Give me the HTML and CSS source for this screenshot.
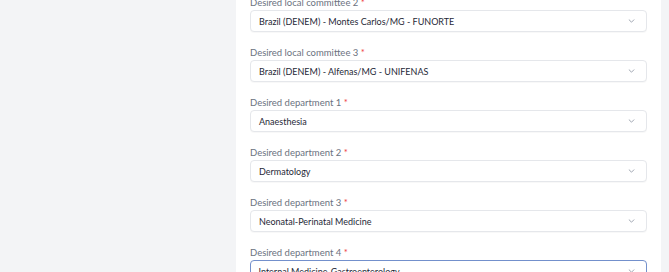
FILE: index.html
```html
<!DOCTYPE html>
<html lang="en">
<head>
  <meta charset="UTF-8" />
  <title>Application preferences</title>
  <link rel="stylesheet" href="styles.css">
</head>
<body>
  <div class="page">
    <div class="panel">
      <form class="form">
        <div class="field">
          <label class="field-label">Desired local committee 2 <span class="req">*</span></label>
          <div class="select">
            <span class="select-value">Brazil (DENEM) - Montes Carlos/MG - FUNORTE</span>
            <svg class="chevron" viewBox="0 0 8 5" width="7" height="4"><path d="M1 1l3 3 3-3" fill="none" stroke="#9ca3af" stroke-width="1.2" stroke-linecap="round" stroke-linejoin="round"/></svg>
          </div>
        </div>
        <div class="field">
          <label class="field-label">Desired local committee 3 <span class="req">*</span></label>
          <div class="select">
            <span class="select-value">Brazil (DENEM) - Alfenas/MG - UNIFENAS</span>
            <svg class="chevron" viewBox="0 0 8 5" width="7" height="4"><path d="M1 1l3 3 3-3" fill="none" stroke="#9ca3af" stroke-width="1.2" stroke-linecap="round" stroke-linejoin="round"/></svg>
          </div>
        </div>
        <div class="field">
          <label class="field-label">Desired department 1 <span class="req">*</span></label>
          <div class="select">
            <span class="select-value">Anaesthesia</span>
            <svg class="chevron" viewBox="0 0 8 5" width="7" height="4"><path d="M1 1l3 3 3-3" fill="none" stroke="#9ca3af" stroke-width="1.2" stroke-linecap="round" stroke-linejoin="round"/></svg>
          </div>
        </div>
        <div class="field">
          <label class="field-label">Desired department 2 <span class="req">*</span></label>
          <div class="select">
            <span class="select-value">Dermatology</span>
            <svg class="chevron" viewBox="0 0 8 5" width="7" height="4"><path d="M1 1l3 3 3-3" fill="none" stroke="#9ca3af" stroke-width="1.2" stroke-linecap="round" stroke-linejoin="round"/></svg>
          </div>
        </div>
        <div class="field">
          <label class="field-label">Desired department 3 <span class="req">*</span></label>
          <div class="select">
            <span class="select-value">Neonatal-Perinatal Medicine</span>
            <svg class="chevron" viewBox="0 0 8 5" width="7" height="4"><path d="M1 1l3 3 3-3" fill="none" stroke="#9ca3af" stroke-width="1.2" stroke-linecap="round" stroke-linejoin="round"/></svg>
          </div>
        </div>
        <div class="field">
          <label class="field-label">Desired department 4 <span class="req">*</span></label>
          <div class="select focused">
            <span class="select-value">Internal Medicine-Gastroenterology</span>
            <svg class="chevron" viewBox="0 0 8 5" width="7" height="4"><path d="M1 1l3 3 3-3" fill="none" stroke="#9ca3af" stroke-width="1.2" stroke-linecap="round" stroke-linejoin="round"/></svg>
          </div>
        </div>
      </form>
    </div>
  </div>
</body>
</html>
```

FILE: styles.css
```css
* {
  box-sizing: border-box;
  margin: 0;
  padding: 0;
}

html, body {
  width: 100%;
  height: 100%;
  overflow: hidden;
  background-color: #f3f4f6;
  font-family: 'Lato', 'Noto Sans', sans-serif;
}

.page {
  display: flex;
  padding-left: 236px;
  height: 100%;
}

.panel {
  width: 425px;
  background-color: #fff;
  padding: 0 14px;
  height: 100%;
}

.form {
  display: flex;
  flex-direction: column;
  gap: 14px;
  margin-top: -4px;
}

.field {
  display: flex;
  flex-direction: column;
}

.field-label {
  font-size: 9.5px;
  line-height: 14px;
  color: #6b7280;
}

.req {
  color: #ef4444;
}

.select {
  display: flex;
  align-items: center;
  justify-content: space-between;
  height: 22px;
  padding: 0 11px 0 8px;
  border: 1px solid #e5e7eb;
  border-radius: 4px;
  background: #fff;
  box-shadow: 0 1px 1px rgba(0, 0, 0, 0.03);
}

.select.focused {
  border: 1.5px solid #7390cc;
  padding-left: 7.5px;
}

.select-value {
  font-size: 9px;
  color: #1f2937;
}

.chevron {
  flex-shrink: 0;
}
```
